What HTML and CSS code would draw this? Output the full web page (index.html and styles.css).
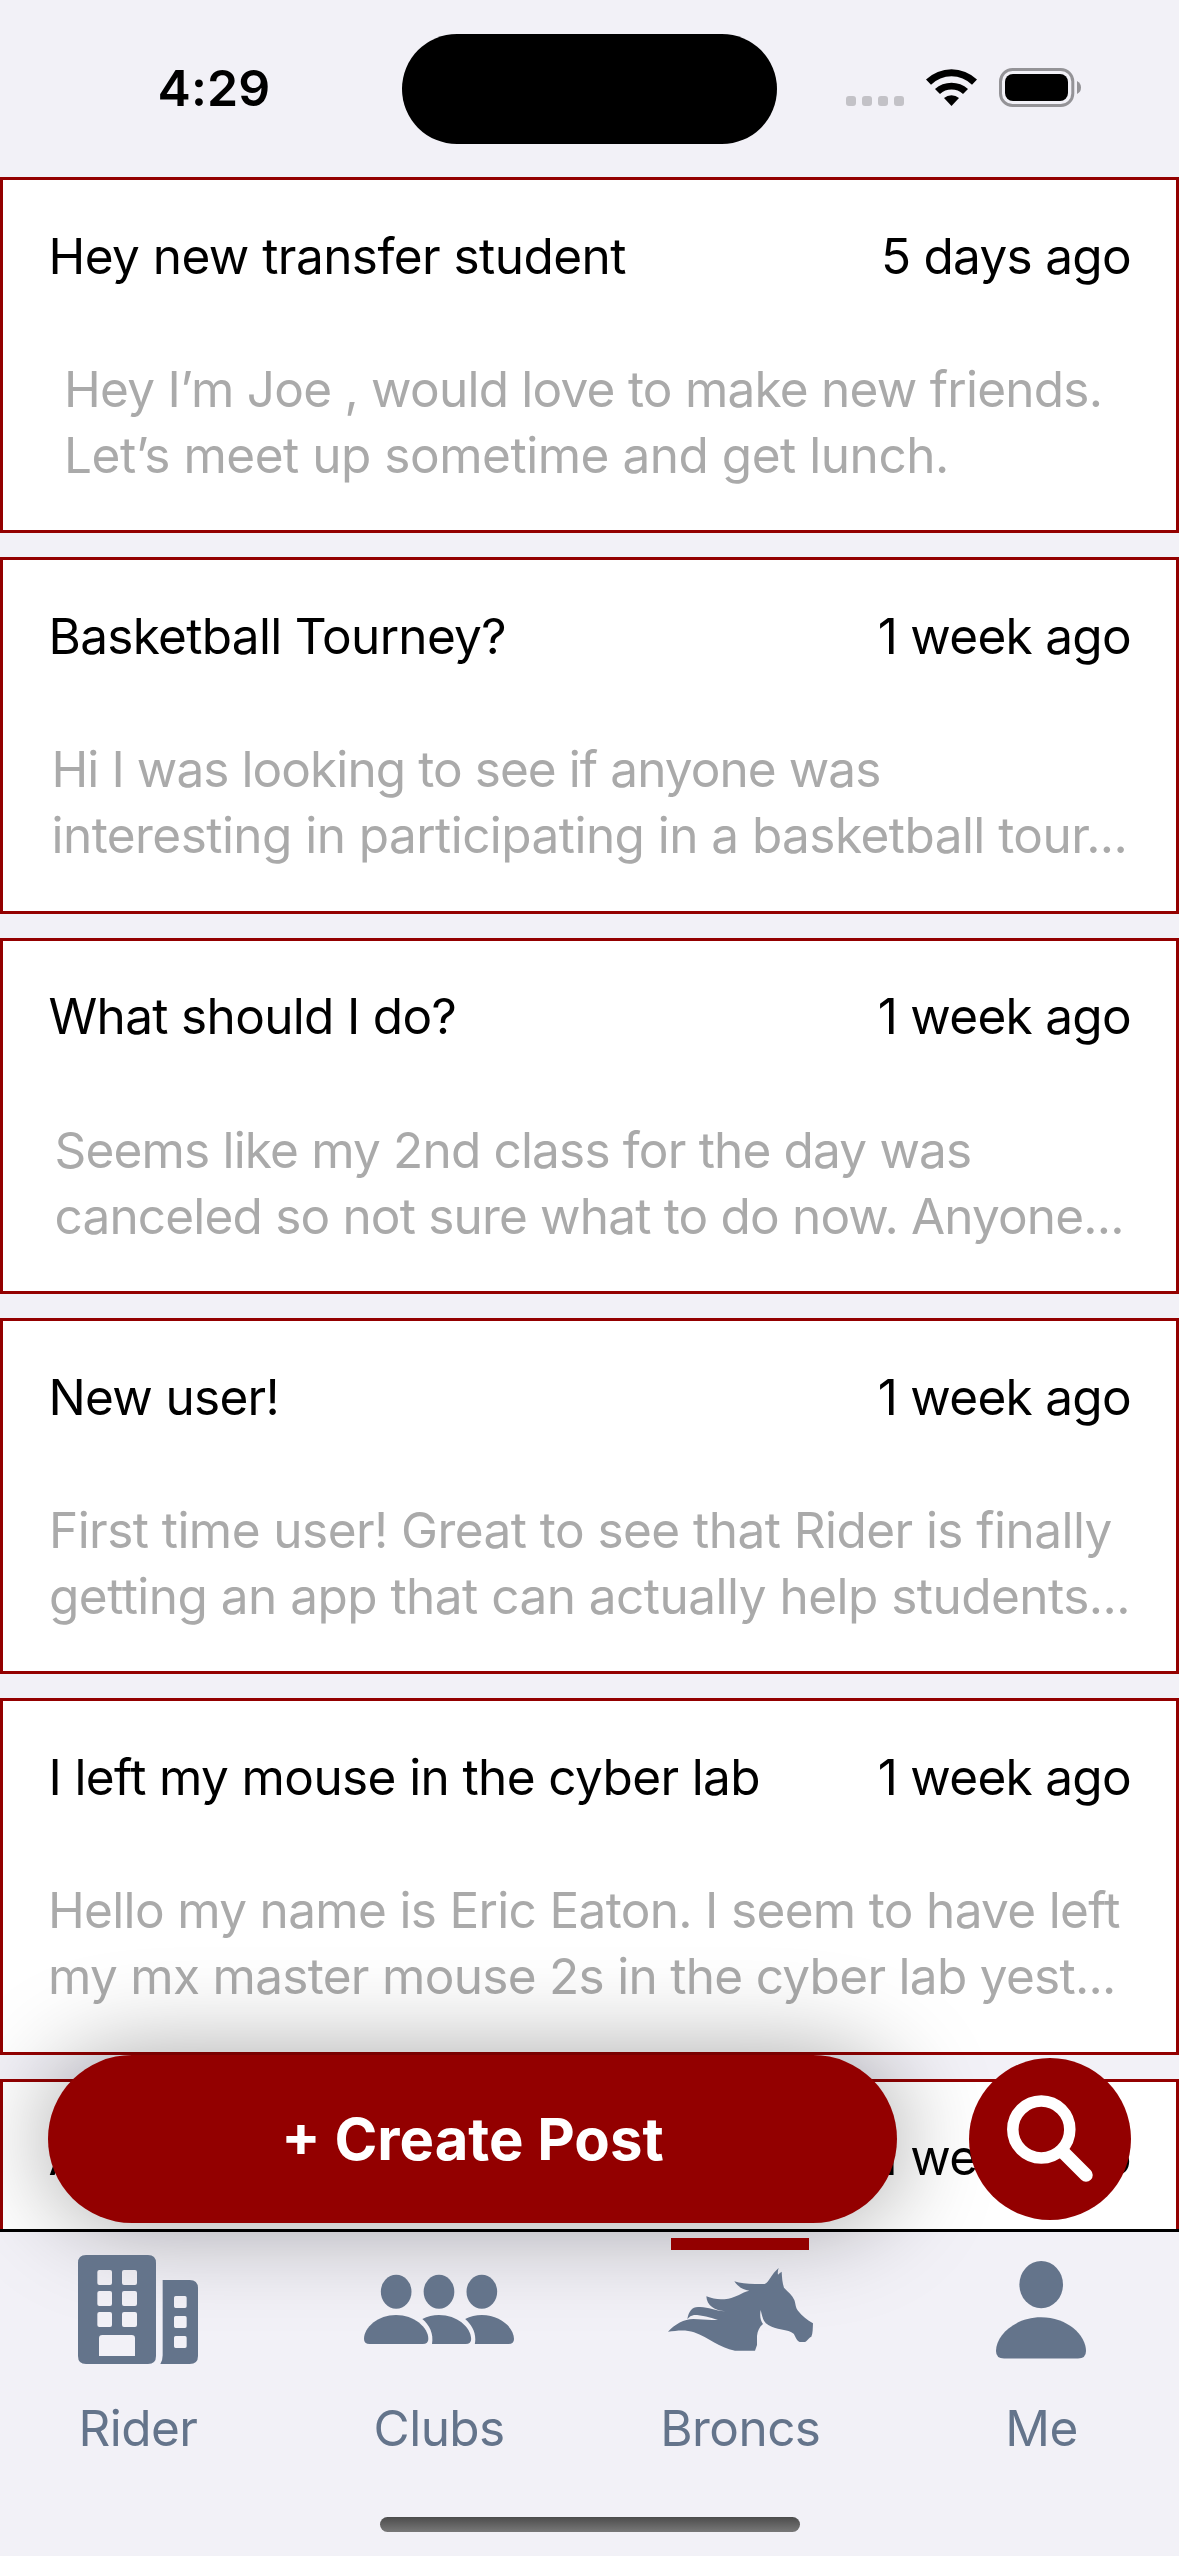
FILE: index.html
```html
<!DOCTYPE html>
<html lang="en">
<head>
<meta charset="utf-8">
<title>Broncs</title>
<link rel="stylesheet" href="styles.css">
</head>
<body>
<div class="phone">
  <header class="status">
    <div class="clock">4:29</div>
    <div class="island"></div>
    <div class="indicators">
      <div class="dots"><i></i><i></i><i></i><i></i></div>
      <svg class="wifi" viewBox="378 87 153 111">
        <path d="M378 118.500A111 111 0 0 1 531 118.500L516 134A88 88 0 0 0 393 134Z"/>
        <path d="M405 147A74 74 0 0 1 504 147L489 162A51 51 0 0 0 420 162Z"/>
        <path d="M432 174A35 35 0 0 1 477 174L454.500 198Z"/>
      </svg>
      <svg class="battery" viewBox="0 0 83 39">
        <rect x="1.500" y="1.500" width="72.300" height="36" rx="12" fill="none" stroke="#949397" stroke-width="3"/>
        <rect x="6" y="6" width="63" height="27" rx="8"/>
        <path d="M78 13Q82 15 82 19.500T78 26Z" fill="#949397"/>
      </svg>
    </div>
  </header>

  <main class="feed">
    <article class="card">
      <div class="card-head"><h2 class="track-55">Hey new transfer student</h2><time>5 days ago</time></div>
      <p class="card-body inset-wide"><span class="track-76">Hey I’m Joe , would love to make new friends.</span><span class="track-47">Let’s meet up sometime and get lunch.</span></p>
    </article>
    <article class="card">
      <div class="card-head"><h2 class="track-70">Basketball Tourney?</h2><time>1 week ago</time></div>
      <p class="card-body inset-small"><span class="track-92">Hi I was looking to see if anyone was</span><span class="track-55">interesting in participating in a basketball tour...</span></p>
    </article>
    <article class="card">
      <div class="card-head"><h2 class="track-67">What should I do?</h2><time>1 week ago</time></div>
      <p class="card-body inset-medium"><span class="track-82">Seems like my 2nd class for the day was</span><span class="track-82">canceled so not sure what to do now. Anyone...</span></p>
    </article>
    <article class="card">
      <div class="card-head"><h2 class="track-70">New user!</h2><time>1 week ago</time></div>
      <p class="card-body inset-none"><span class="track-55">First time user! Great to see that Rider is finally</span><span class="track-52">getting an app that can actually help students...</span></p>
    </article>
    <article class="card">
      <div class="card-head"><h2 class="track-61">I left my mouse in the cyber lab</h2><time>1 week ago</time></div>
      <p class="card-body"><span class="track-67">Hello my name is Eric Eaton. I seem to have left</span><span class="track-70">my mx master mouse 2s in the cyber lab yest...</span></p>
    </article>
    <article class="card">
      <div class="card-head"><h2>A</h2><time>1 week ago</time></div>
    </article>
  </main>

  <nav class="tabs">
    <a class="tab">
      <svg class="tab-icon" viewBox="27 60 414 360">
        <path fill-rule="evenodd" d="M78 75H264Q288 75 288 99V378Q288 402 264 402H78Q54 402 54 378V99Q54 75 78 75ZM118 120Q112 120 112 126V159Q112 165 118 165H150Q156 165 156 159V126Q156 120 150 120ZM192 120Q186 120 186 126V159Q186 165 192 165H225Q231 165 231 159V126Q231 120 225 120ZM118 183Q112 183 112 189V222Q112 228 118 228H150Q156 228 156 222V189Q156 183 150 183ZM192 183Q186 183 186 189V222Q186 228 192 228H225Q231 228 231 222V189Q231 183 225 183ZM118 246Q112 246 112 252V285Q112 291 118 291H150Q156 291 156 285V252Q156 246 150 246ZM192 246Q186 246 186 252V285Q186 291 192 291H225Q231 291 231 285V252Q231 246 225 246ZM127 315Q117 315 117 325V378H225V325Q225 315 215 315Z"/>
        <path fill-rule="evenodd" d="M308 150H389Q414 150 414 175V378Q414 402 389 402H301Q308 392 308 376ZM347 198Q342 198 342 203V229Q342 234 347 234H375Q380 234 380 229V203Q380 198 375 198ZM347 258Q342 258 342 263V289Q342 294 347 294H375Q380 294 380 289V263Q380 258 375 258ZM347 318Q342 318 342 323V349Q342 354 347 354H375Q380 354 380 349V323Q380 318 375 318Z"/>
      </svg>
      <span class="tab-label">Rider</span>
    </a>
    <a class="tab">
      <svg class="tab-icon" viewBox="60 30 414 360">
        <ellipse cx="138.500" cy="155.500" rx="46" ry="51"/>
        <ellipse cx="267" cy="155.500" rx="46" ry="51"/>
        <ellipse cx="395.500" cy="155.500" rx="46" ry="51"/>
        <path d="M42 297C42 262 84 225 138 225S235 262 235 297Q235 312 218 312H59Q42 312 42 297Z"/>
        <path d="M217 237Q240 225 267 225C321 225 363.500 262 363.500 297Q363.500 312 347 312H246C252 281 238 255 217 237Z"/>
        <path d="M345.500 237Q368.500 225 395.500 225C449.500 225 492 262 492 297Q492 312 475.500 312H374.500C380.500 281 366.500 255 345.500 237Z"/>
      </svg>
      <span class="tab-label">Clubs</span>
    </a>
    <a class="tab active">
      <svg class="tab-icon" viewBox="93 90 414 360">
        <path d="M84 335C105 313 132 297 160 297C185 297 207 302 234 299C208 293 188 285 162 285Q150 287 142 297C146 275 156 261 174 261C205 259 222 273 256 274C225 272 200 257 199 229C222 238 240 239 265 236C290 231 304 218 328 212C308 209 293 200 283 184C300 190 320 192 345 192H374C389 185 393 163 416 144Q412 155 414 164Q418 160 425 155C426 173 427 188 432 203C445 217 457 225 463 240C467 250 466 263 474 272C486 289 502 299 519 310C518 325 519 340 514 350C505 353 503 364 494 366H479C468 360 465 346 461 341C446 327 405 330 385 315C369 307 367 289 362 270C359 287 361 302 369 312C357 322 353 334 351 348V375L345 392H285C237 384 208 353 162 337C137 328 110 332 84 335Z"/>
      </svg>
      <span class="tab-label">Broncs</span>
    </a>
    <a class="tab">
      <svg class="tab-icon" viewBox="0 0 138 120">
        <ellipse cx="69.200" cy="34.600" rx="21.800" ry="23.600"/>
        <path d="M24 101C24 85 43 67.300 69 67.300S114 85 114 101Q114 108.500 106 108.500H32Q24 108.500 24 101Z"/>
      </svg>
      <span class="tab-label">Me</span>
    </a>
  </nav>

  <button class="create">+ Create Post</button>
  <button class="search" aria-label="Search">
    <svg viewBox="0 0 162 162"><circle cx="72.300" cy="71.500" r="28.500"/><path d="M93 93L117 117"/></svg>
  </button>
  <div class="home-bar"></div>
</div>
</body>
</html>
```
FILE: styles.css
```css
* { box-sizing: border-box; margin: 0; padding: 0; }

body {
  width: 1179px;
  height: 2556px;
  overflow: hidden;
  background: #f2f1f7;
  color: #000;
  font-family: Inter, "Liberation Sans", sans-serif;
}

.phone {
  position: relative;
  display: flex;
  flex-direction: column;
  width: 1179px;
  height: 2556px;
}

/* status bar */
.status {
  display: grid;
  grid-template-columns: 402px 375px 1fr;
  height: 177px;
  flex: none;
}
.clock {
  padding: 58px 0 0 157.5px;
  font-size: 50px;
  font-weight: 600;
  line-height: 60px;
  letter-spacing: .1px;
}
.island {
  height: 110px;
  margin-top: 34px;
  border-radius: 55px;
  background: #000;
}
.indicators {
  display: flex;
  align-items: flex-start;
  padding: 68px 0 0 69px;
}
.dots { display: flex; gap: 6px; padding-top: 28px; }
.dots i { width: 10px; height: 10px; border-radius: 3px; background: #c3c2c7; }
.wifi { width: 51px; height: 37px; margin: 1px 0 0 22px; }
.battery { width: 83px; height: 39px; margin-left: 22px; }

/* posts */
.feed {
  display: flex;
  flex-direction: column;
  gap: 24px;
  height: 2052px;
  flex: none;
  overflow: hidden;
}
.card {
  height: 356.33px;
  flex: none;
  padding: 42.6px 45px 0;
  border: 3px solid #930000;
  background: #fff;
  font-size: 49.5px;
  line-height: 66px;
  white-space: nowrap;
}
.card-head { display: flex; justify-content: space-between; }
.card-head h2 { font-size: inherit; font-weight: 400; margin-left: .5px; }
.card-head time { letter-spacing: -.7px; }
.card-body { margin-top: 67.4px; color: #aaa; }
.card-body span { display: block; }

.inset-none { padding-left: 1px; }
.inset-small { padding-left: 3.5px; }
.inset-medium { padding-left: 6.5px; }
.inset-wide { padding-left: 16px; }

.track-47 { letter-spacing: -.47px; }
.track-52 { letter-spacing: -.52px; }
.track-55 { letter-spacing: -.55px; }
.track-61 { letter-spacing: -.61px; }
.track-67 { letter-spacing: -.67px; }
.track-70 { letter-spacing: -.7px; }
.track-76 { letter-spacing: -.76px; }
.track-82 { letter-spacing: -.82px; }
.track-92 { letter-spacing: -.92px; }

/* tab bar */
.tabs {
  display: flex;
  justify-content: space-between;
  flex: 1;
  padding: 6px 68.5px 0 69px;
  border-top: 3px solid #000;
}
.tab {
  position: relative;
  z-index: 2;
  display: flex;
  flex-direction: column;
  align-items: center;
  gap: 28px;
  width: 138px;
  height: 222px;
  border-top: 12px solid transparent;
  color: #64748b;
}
.tab.active { border-top-color: #930000; }
.tab-icon { width: 138px; height: 120px; overflow: visible; fill: currentColor; flex: none; }
.tab-label { font-size: 49.5px; line-height: 60px; letter-spacing: -.55px; }

/* floating actions over the feed */
.create, .search { position: absolute; border: 0; background: #930000; color: #fff; }
.create {
  z-index: 1;
  left: 48px;
  top: 2055px;
  width: 849px;
  height: 168px;
  border-radius: 84px;
  box-shadow: 0 0 98px rgba(0, 0, 0, .36);
  font: 700 58px/70px Inter, "Liberation Sans", sans-serif;
}
.search {
  z-index: 2;
  left: 969px;
  top: 2058px;
  width: 162px;
  height: 162px;
  border-radius: 50%;
}
.search svg { display: block; fill: none; stroke: #fff; }
.search circle { stroke-width: 11.5px; }
.search path { stroke-width: 13.5px; stroke-linecap: round; }

.home-bar {
  position: absolute;
  left: 380px;
  top: 2517px;
  width: 420px;
  height: 15px;
  border-radius: 7.5px;
  background: linear-gradient(#4c4c4c, #787878);
}
```
